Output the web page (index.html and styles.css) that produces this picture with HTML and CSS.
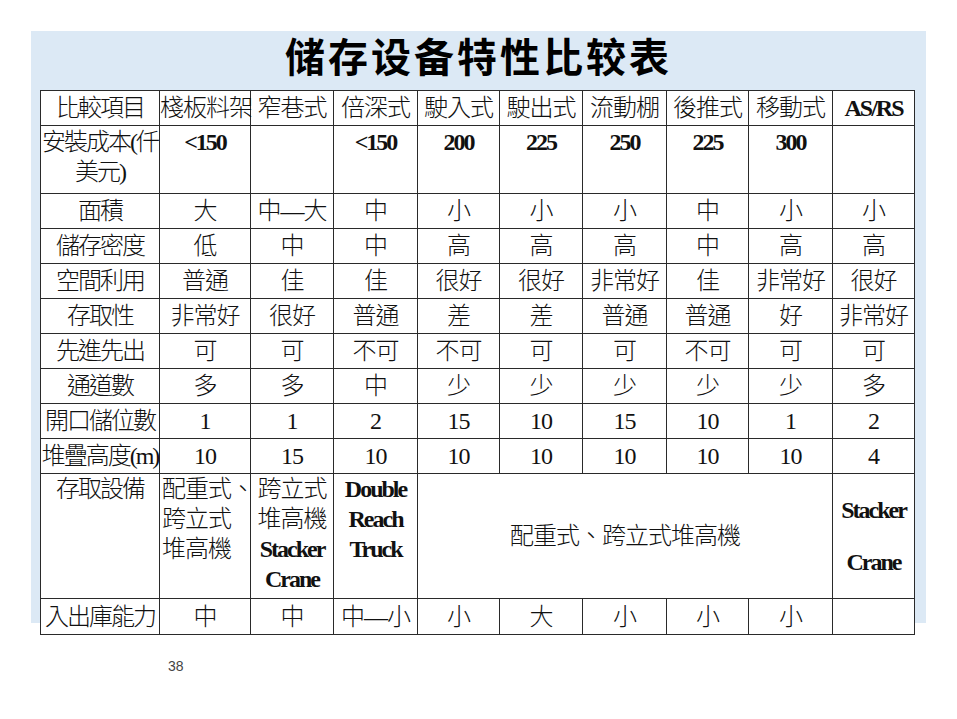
FILE: index.html
```html
<!DOCTYPE html>
<html lang="zh-Hant">
<head>
<meta charset="utf-8">
<title>储存设备特性比较表</title>
<link rel="stylesheet" href="styles.css">
</head>
<body>
<div class="slide">
  <section class="panel">
    <h1 class="title">储存设备特性比较表</h1>
    <table class="cmp">
      <colgroup>
        <col class="c0"><col class="c1"><col class="c2"><col class="c3"><col class="c4">
        <col class="c5"><col class="c6"><col class="c7"><col class="c8"><col class="c9">
      </colgroup>
      <tr class="r35">
        <td class="lab">比較項目</td><td>棧板料架</td><td>窄巷式</td><td>倍深式</td><td>駛入式</td><td>駛出式</td><td>流動棚</td><td>後推式</td><td>移動式</td><td class="b">AS/RS</td>
      </tr>
      <tr class="r68 top">
        <td class="lab cost">安裝成本(仟<br>美元)</td><td class="b">&lt;150</td><td></td><td class="b">&lt;150</td><td class="b">200</td><td class="b">225</td><td class="b">250</td><td class="b">225</td><td class="b">300</td><td></td>
      </tr>
      <tr class="r35">
        <td class="lab">面積</td><td>大</td><td>中—大</td><td>中</td><td>小</td><td>小</td><td>小</td><td>中</td><td>小</td><td>小</td>
      </tr>
      <tr class="r35">
        <td class="lab">儲存密度</td><td>低</td><td>中</td><td>中</td><td>高</td><td>高</td><td>高</td><td>中</td><td>高</td><td>高</td>
      </tr>
      <tr class="r35">
        <td class="lab">空間利用</td><td>普通</td><td>佳</td><td>佳</td><td>很好</td><td>很好</td><td>非常好</td><td>佳</td><td>非常好</td><td>很好</td>
      </tr>
      <tr class="r35">
        <td class="lab">存取性</td><td>非常好</td><td>很好</td><td>普通</td><td>差</td><td>差</td><td>普通</td><td>普通</td><td>好</td><td>非常好</td>
      </tr>
      <tr class="r35">
        <td class="lab">先進先出</td><td>可</td><td>可</td><td>不可</td><td>不可</td><td>可</td><td>可</td><td>不可</td><td>可</td><td>可</td>
      </tr>
      <tr class="r35">
        <td class="lab">通道數</td><td>多</td><td>多</td><td>中</td><td>少</td><td>少</td><td>少</td><td>少</td><td>少</td><td>多</td>
      </tr>
      <tr class="r35">
        <td class="lab">開口儲位數</td><td>1</td><td>1</td><td>2</td><td>15</td><td>10</td><td>15</td><td>10</td><td>1</td><td>2</td>
      </tr>
      <tr class="r35">
        <td class="lab">堆疊高度(m)</td><td>10</td><td>15</td><td>10</td><td>10</td><td>10</td><td>10</td><td>10</td><td>10</td><td>4</td>
      </tr>
      <tr class="r125">
        <td class="lab top">存取設備</td>
        <td class="top left stack">配重式、<br>跨立式<br>堆高機</td>
        <td class="top stack">跨立式<br>堆高機<br><span class="b">Stacker</span><br><span class="b">Crane</span></td>
        <td class="top stack b">Double<br>Reach<br>Truck</td>
        <td colspan="5" class="merged">配重式、跨立式堆高機</td>
        <td class="b wide">Stacker<br>Crane</td>
      </tr>
      <tr class="r36">
        <td class="lab">入出庫能力</td><td>中</td><td>中</td><td>中—小</td><td>小</td><td>大</td><td>小</td><td>小</td><td>小</td><td></td>
      </tr>
    </table>
  </section>
  <footer class="pagenum">38</footer>
</div>
</body>
</html>
```
FILE: styles.css
```css
html, body {
  margin: 0;
  padding: 0;
  background: #ffffff;
}

.slide {
  width: 957px;
  height: 719px;
  padding-top: 31px;
  box-sizing: border-box;
}

.panel {
  margin-left: 31px;
  width: 895px;
  height: 592px;
  background: #dce9f5;
}

.title {
  margin: 0;
  height: 59px;
  padding-top: 0;
  box-sizing: border-box;
  text-align: center;
  font-family: "Noto Sans CJK SC", sans-serif;
  font-weight: 700;
  font-size: 40px;
  line-height: 48px;
  letter-spacing: 3px;
  color: #000000;
}

.cmp {
  margin-left: 9px;
  width: 874px;
  table-layout: fixed;
  border-collapse: collapse;
  background: #ffffff;
  font-family: "Liberation Serif", "Noto Sans CJK TC", serif;
  font-size: 24px;
  font-weight: 300;
  color: #111111;
  letter-spacing: -1px;
}

.c0 { width: 119px; }
.c1 { width: 91px; }
.c2 { width: 83px; }
.c3 { width: 84px; }
.c4 { width: 82px; }
.c5 { width: 83px; }
.c6 { width: 84px; }
.c7 { width: 82px; }
.c8 { width: 84px; }
.c9 { width: 82px; }

.cmp td {
  border: 1px solid #2a2a2a;
  padding: 0;
  text-align: center;
  vertical-align: middle;
  white-space: nowrap;
  overflow: visible;
  line-height: 30px;
}

.r35 { height: 35px; }
.r36 { height: 36px; }
.r68 { height: 68px; }
.r125 { height: 125px; }

.top td,
.cmp td.top {
  vertical-align: top;
}

.lab {
  letter-spacing: -2px;
}

.cost {
  line-height: 34px;
}

.r68 td {
  padding-top: 1px;
}

.b {
  font-weight: 700;
  letter-spacing: -2px;
}

.stack {
  padding-top: 1px;
}

.cmp td.left {
  text-align: left;
  padding-left: 2px;
}

.merged {
  padding-top: 10px;
}

.cmp td.wide {
  line-height: 52px;
}

.pagenum {
  margin-top: 35px;
  padding-left: 168px;
  font-family: "Liberation Sans", Arial, sans-serif;
  font-size: 14px;
  line-height: 16px;
  color: #444444;
}
```
